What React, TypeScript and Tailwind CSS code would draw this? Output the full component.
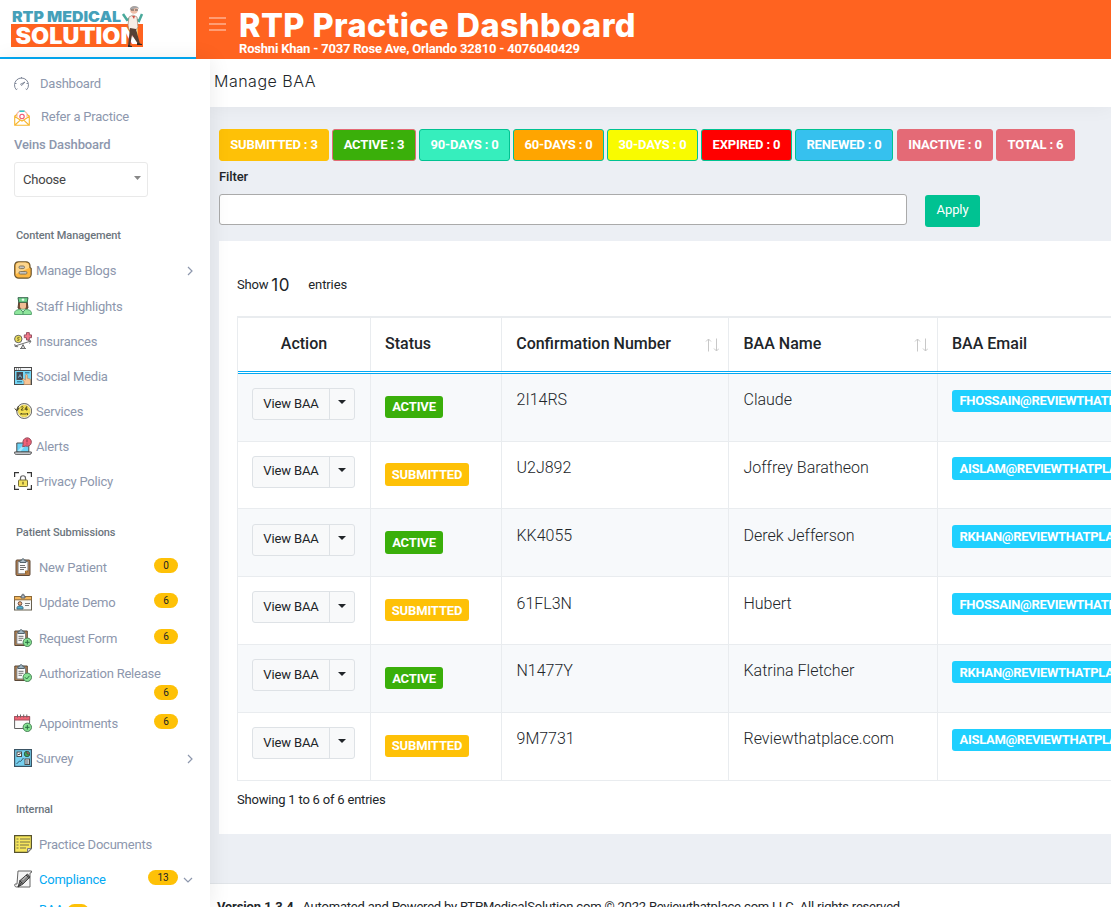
import type { ReactNode } from "react";

type IconProps = { children: ReactNode };

function Icon({ children }: IconProps) {
  return (
    <svg width="18" height="18" viewBox="0 0 18 18" fill="none" stroke="#4a4a4a" strokeWidth="1" className="-mt-[2px] block shrink-0">
      {children}
    </svg>
  );
}

const icons = {
  blog: (
    <Icon>
      <path d="M4.500.8h7.500a4 4 0 0 1 4 4v1.700l1.200 1v5.700a4 4 0 0 1-4 4h-8.500a4 4 0 0 1-4-4v-8.400a4 4 0 0 1 3.800-4z" fill="#fdb63f" stroke="#6b5632" strokeWidth="1.200" />
      <path d="M2 4a3 3 0 0 1 3-2.500h6.500A4 4 0 0 1 15 4.500V7L2 13z" fill="#fdd68d" stroke="none" />
      <rect x="5" y="5" width="5.500" height="2.600" rx="1.300" fill="#c5c5c5" stroke="#85775a" />
      <rect x="5" y="10.500" width="8" height="2.600" rx="1.300" fill="#c5c5c5" stroke="#85775a" />
    </Icon>
  ),
  staff: (
    <Icon>
      <path d="M4.800 5 4 11l2.500 1.500h5L14 11l-.8-6z" fill="#7a4d30" stroke="#54402f" />
      <path d="M6 5.500h6v3.700a3 3 0 0 1-6 0z" fill="#f0bd94" stroke="none" />
      <path d="M4 .7h10l-.8 4.600H4.800z" fill="#6fd58b" stroke="#35644a" />
      <path d="M9 1.500v2.600M7.700 2.800h2.600" stroke="#fff" />
      <path d="M.6 17.500v-1.700c0-2 2-3 6-3.500h4.800c4 .5 6 1.500 6 3.500v1.700z" fill="#8fe69c" stroke="#5aa573" />
      <path d="M6.500 12.500 9 15l2.500-2.500M9 15v2.500" stroke="#4f9468" fill="#c7f3cd" />
    </Icon>
  ),
  insurance: (
    <Icon>
      <circle cx="4.300" cy="7" r="3.700" fill="#efe15a" stroke="#666" />
      <path d="M5.500 5.700c-2-1-2.700.8-1.200 1.200s.8 2.200-1.200 1.200" stroke="#6f6526" />
      <path d="M12.500.6h2.800v2.300h2.200v2.800h-2.200V8h-2.800V5.700h-2.200V2.900h2.200z" fill="#f2778b" stroke="#965260" />
      <path d="M1 14 17 9M.8 12l.3 2.500 3 .2M14 8.500l3 .5-1.500 2.500" stroke="#707070" />
      <path d="M6 16.500h6M7 16.500l2-4 2 4" fill="#d5d5d5" stroke="#707070" />
    </Icon>
  ),
  social: (
    <Icon>
      <rect x=".5" y=".5" width="17" height="17" fill="#76d7f5" />
      <rect x=".5" y=".5" width="17" height="3" fill="#f3f5f7" />
      <path d="M2 2h1M4 2h1M6 2h1" />
      <rect x="3" y="5.500" width="5.500" height="7" fill="#3e4857" />
      <path d="M4.500 10.500c0-2 3-2 3 0M6 7.500v1" stroke="#9bd6e8" />
      <path d="M11 5.800h4.500M3 14.800h5" stroke="#27627d" />
      <path d="M10 17.500v-3l-1.500-2 1-.8 2 1.200V8.300c0-1.300 1.800-1.300 1.800 0v3l3.200 1v5.200z" fill="#f8c595" stroke="#b98b63" strokeWidth=".7" />
    </Icon>
  ),
  services: (
    <Icon>
      <circle cx="10.200" cy="9" r="7.500" fill="#f5f1dc" stroke="#666" />
      <circle cx="10.200" cy="9" r="5.800" fill="#f3de50" stroke="#e5d358" />
      <path d="M7 5.500c.2-1.300 2.600-1.200 2 .2L7 8h2.500M12.700 8.500V4.500L10.800 7.300h3" stroke="#57501c" />
      <path d="M7 13v-2l1 1h4.500l1-1v2" stroke="#57501c" />
      <path d="M4.500 4 3.200 8M.6 6.500l2.500 2.300 2-2.800" stroke="#453f20" />
    </Icon>
  ),
  alerts: (
    <Icon>
      <path d="M2.800 15V6h12v9z" fill="#69d3f7" />
      <path d="m3.500 14 7-7.500h3L6.500 14.500z" fill="#a9e9fc" stroke="none" />
      <path d="M.6 15h16.800v.8c0 1-.7 1.500-1.500 1.500H2.100C1.100 17.300.6 16.800.6 15.800z" fill="#e1e5ea" />
      <path d="m8.700 9.800.5-3.300a4.200 4.200 0 1 1 2.500 2.500z" fill="#f06277" stroke="#8e4a59" />
      <path d="M13 2.300v3M13 6.500v.9" stroke="#8b3a4d" />
    </Icon>
  ),
  privacy: (
    <Icon>
      <path d="M.6 5V.6H5M13 .6h4.400V5M17.400 13v4.400H13M5 17.400H.6V13" stroke="#353535" strokeWidth="1.200" />
      <path d="M6.500 8V6c0-3 5-3 5 0v2" stroke="#666" strokeWidth="1.200" />
      <rect x="4.500" y="8" width="9" height="6.500" rx=".8" fill="#f4e25e" stroke="#756e3a" />
      <path d="M9 9.800v2.800" stroke="#625924" strokeWidth="1.200" />
    </Icon>
  ),
  patient: (
    <Icon>
      <rect x="2" y="2" width="14" height="15.500" rx="1" fill="#b87f4b" stroke="#5f4937" />
      <path d="M4 3.500h10v9.500l-2.500 2.800H4z" fill="#fafafa" stroke="#777" />
      <path d="M11.500 16v-3H14z" fill="#f6ad40" stroke="#9c6b31" />
      <path d="M6 4.500V2.300h1.700C7.700.2 10.300.2 10.300 2.300H12v2.200z" fill="#a8bac5" stroke="#53636c" />
      <path d="M6 7.500h5M6 9.500h6M6 11.500h4" stroke="#707070" />
    </Icon>
  ),
  demo: (
    <Icon>
      <rect x=".5" y="3.500" width="17" height="13.500" fill="#f8f8f8" stroke="#67604f" />
      <rect x=".5" y="3.500" width="17" height="3.300" fill="#f3b65c" stroke="#8d6a38" />
      <path d="M7 5V3h1C8 .2 10 .2 10 3h1v2z" fill="#b3bcc4" stroke="#596069" />
      <path d="M3 16v-1.500c0-2 6-2 6 0V16z" fill="#4bb2d4" stroke="#426c80" />
      <circle cx="6" cy="10.500" r="1.800" fill="#f2b17c" stroke="#69473b" />
      <path d="M11 10.500h5M11 12.500h4" stroke="#777" />
    </Icon>
  ),
  request: (
    <Icon>
      <path d="M.8 2h12.500v14.500H.8z" fill="#b7824f" stroke="#594838" />
      <path d="M2.800 4h8.800v11H2.800z" fill="#fafafa" stroke="#777" />
      <path d="M4 4.500V2.300h1.500C5.500.2 8.700.2 8.700 2.300h1.500v2.200z" fill="#9fb5c2" stroke="#53636c" />
      <path d="M4.500 7.300h5M4.500 9.300h5M4.500 11.300H8" stroke="#707070" />
      <circle cx="13.300" cy="13.300" r="4.200" fill="#86e291" stroke="#4a8058" />
      <path d="M13.300 11v4.600M11 13.300h4.600" stroke="#276c40" />
    </Icon>
  ),
  authorization: (
    <Icon>
      <path d="M.8 2h12.500v14.500H.8z" fill="#b7824f" stroke="#594838" />
      <path d="M2.800 4h8.800v11H2.800z" fill="#fafafa" stroke="#777" />
      <path d="M4 4.500V2.300h1.500C5.500.2 8.700.2 8.700 2.300h1.500v2.200z" fill="#9fb5c2" stroke="#53636c" />
      <path d="M4.500 7.300h5M4.500 9.300h5M4.500 11.300H8" stroke="#707070" />
      <circle cx="13.300" cy="13.300" r="4.200" fill="#86e291" stroke="#4a8058" />
      <path d="m11 13.300 1.700 1.700 2.800-3.200" stroke="#276c40" />
    </Icon>
  ),
  appointments: (
    <Icon>
      <path d="M.6 2.500h15v12h-15z" fill="#fbfbfb" stroke="#606060" />
      <path d="M.6 2.500h15v3.500h-15z" fill="#f06475" stroke="#a9515f" />
      <path d="M3.500.5v3M6.500.5v3M9.700.5v3M12.800.5v3" stroke="#666" />
      <circle cx="13.300" cy="13.300" r="4.200" fill="#86e291" stroke="#4a8058" />
      <path d="M13.300 11v4.600M11 13.300h4.600" stroke="#276c40" />
    </Icon>
  ),
  survey: (
    <Icon>
      <rect x=".6" y=".6" width="16.800" height="16.800" fill="#76d0ef" stroke="#3b5464" strokeWidth="1.200" />
      <rect x="3" y="3" width="4.500" height="4.500" fill="#f7f7f7" />
      <path d="m4 5 1 1 1.500-2" />
      <circle cx="13" cy="5" r="2.700" fill="#3fa45a" stroke="#355e47" />
      <path d="M13 2.300V5h2.700" fill="#f06475" stroke="#415048" />
      <rect x="11" y="10" width="4.500" height="5.500" fill="#f5f5f5" />
      <path d="M12 12h2.500M12 14h2.500M2.500 15l3-3 1 .5 3-3.500" stroke="#36566a" />
    </Icon>
  ),
  documents: (
    <Icon>
      <path d="M.6.6h16.800v13l-3.800 3.800H.6z" fill="#f6e65c" stroke="#57532f" strokeWidth="1.200" />
      <path d="M13.500 17.300v-3.800h3.800z" fill="#ddd" stroke="#77777f" />
      <path d="M2.500 4h2M6 4h10M2.500 7h2M6 7h10M2.500 10h2M6 10h9M2.500 13h2M6 13h6" stroke="#757048" />
    </Icon>
  ),
  compliance: (
    <Icon>
      <path d="M4 1h13.500v1.500l-1.500.5v14H2.500C.3 17 .5 14.500 1 14h2z" fill="#f5f5f5" stroke="#666" />
      <path d="m4 17 2-6.500 7.500-6.500 2.500 3-7 7z" fill="#858585" stroke="#434343" />
      <path d="m4 17 4-5M12 5l3.500 3M5.500 10.500l3 3" stroke="#333" />
      <path d="m8.500 10 4-4" stroke="#d9d9d9" />
    </Icon>
  ),
};

function Chevron({ down = false }: { down?: boolean }) {
  return (
    <svg width="10" height="10" viewBox="0 0 10 10" fill="none" stroke="#8d97ad" strokeWidth="1.200">
      <path d={down ? "m1 3 4 4 4-4" : "m3 1 4 4-4 4"} />
    </svg>
  );
}

type RowProps = { icon: ReactNode; label: string; gap?: string; height?: string; count?: string; chevron?: boolean };

function Row({ icon, label, gap = "gap-1", height = "h-[35px]", count, chevron }: RowProps) {
  return (
    <li className={`flex items-center ${height} ${gap} pl-[14px] pr-[15px]`}>
      {icon}
      <span className="whitespace-nowrap">{label}</span>
      {count && <Count value={count} />}
      {chevron && (
        <span className="ml-auto">
          <Chevron />
        </span>
      )}
    </li>
  );
}

function Count({ value, className = "ml-auto mr-[17px] -mt-[4px] w-6" }: { value: string; className?: string }) {
  return (
    <span className={`flex h-[15px] items-center justify-center rounded-full bg-[#fec107] pt-px text-[10px] leading-none tracking-normal text-[#212529] ${className}`}>
      {value}
    </span>
  );
}

function Sidebar() {
  return (
    <nav className="relative z-10 h-[848px] w-[210px] shrink-0 bg-white text-[13px] leading-5 tracking-[-0.22px] text-[#8d97ad] shadow-[1px_0_20px_rgba(0,0,0,0.08)]">
      <div className="h-[848px] overflow-hidden pt-2">
        <ul>
          <li className="flex h-[33px] items-center pl-[14px]">
            <svg width="15" height="15" viewBox="0 0 15 15" fill="none" stroke="#7f8798" strokeWidth="1">
              <path d="M3.400 12.800 2.300 13.700a7 7 0 1 1 10.400 0l-1.100-.9M7.500 1v1.500M1 7.500h1.500M12.500 7.500H14M3 3l.8.8M12 3l-.8.8" />
              <path d="M6.500 8.300 11 6 7.800 9.500z" />
            </svg>
            <span className="ml-[11px]">Dashboard</span>
          </li>
          <li className="flex h-[33px] items-center pl-[14px]">
            <svg width="16" height="16" viewBox="0 0 16 16" fill="none" strokeWidth="1.100" className="mt-[2px]">
              <path d="M3 7V3.500L5.500 1h5L13 3.500V7" stroke="#f7b6a9" fill="#fff" />
              <path d="M5.500 1.200h5" stroke="#28c8c8" strokeWidth="1.500" />
              <circle cx="8" cy="6.500" r="2.200" stroke="#ed5570" />
              <path d="M3 4.500.7 6v9.300h14.600V6L13 4.500M.7 6.500 8 11l7.300-4.500M1 15l5-4.700M15 15l-5-4.700" stroke="#f7b62e" />
            </svg>
            <span className="ml-[11px]">Refer a Practice</span>
          </li>
        </ul>
        <div className="mt-[2px] pl-[14px] font-medium tracking-[-0.13px]">Veins Dashboard</div>
        <div className="ml-[14px] mt-[7px] flex h-[35px] w-[134px] items-center justify-between rounded-[3px] border border-[#e9e9e9] pl-2 pr-[6px] text-[#444]">
          Choose
          <svg width="7" height="4" viewBox="0 0 7 4" className="-mt-[3px]">
            <path d="M0 0h7L3.500 4z" fill="#888" />
          </svg>
        </div>
        <h2 className="mt-[29px] pl-4 text-[11px] font-medium tracking-[-0.1px] text-[#6c757d]">Content Management</h2>
        <ul className="mt-[7px]">
          <Row icon={icons.blog} label="Manage Blogs" chevron height="h-[36px]" />
          <Row icon={icons.staff} label="Staff Highlights" />
          <Row icon={icons.insurance} label="Insurances" />
          <Row icon={icons.social} label="Social Media" />
          <Row icon={icons.services} label="Services" />
          <Row icon={icons.alerts} label="Alerts" />
          <Row icon={icons.privacy} label="Privacy Policy" />
        </ul>
        <h2 className="mt-[24px] pl-4 text-[11px] font-medium tracking-[-0.1px] text-[#6c757d]">Patient Submissions</h2>
        <ul className="mt-[7px]">
          <Row icon={icons.patient} label="New Patient" count="0" gap="gap-[7px]" />
          <Row icon={icons.demo} label="Update Demo" count="6" gap="gap-[7px]" />
          <Row icon={icons.request} label="Request Form" count="6" gap="gap-[7px]" height="h-[37px]" />
          <Row icon={icons.authorization} label="Authorization Release" gap="gap-[7px]" height="h-[34px]" />
        </ul>
        <Count value="6" className="-mt-[6px] ml-[154px] w-6" />
        <ul className="mt-[6px]">
          <Row icon={icons.appointments} label="Appointments" count="6" gap="gap-[7px]" />
          <Row icon={icons.survey} label="Survey" chevron />
        </ul>
        <h2 className="mt-[24px] pl-4 text-[11px] font-medium tracking-[-0.1px] text-[#6c757d]">Internal</h2>
        <ul className="mt-[7px]">
          <Row icon={icons.documents} label="Practice Documents" gap="gap-[7px]" />
          <li className="flex h-[35px] items-center gap-[7px] pl-[14px] text-[#03a9f3]">
            {icons.compliance}
            <span>Compliance</span>
            <Count value="13" className="-mt-[4px] ml-auto w-[30px]" />
            <span className="-ml-[2px] mr-[17px]">
              <Chevron down />
            </span>
          </li>
          <li className="flex items-start pl-[39px] pt-[3px] text-[#03a9f3]">
            <span className="w-[28px]">BAA</span>
            <Count value="6" className="mt-[4px] w-[22px]" />
          </li>
        </ul>
      </div>
    </nav>
  );
}

function Logo() {
  return (
    <svg width="196" height="57" viewBox="0 0 196 57" className="block">
      <text x="12" y="21.500" fontFamily="Inter, sans-serif" fontWeight="900" fontSize="15" fill="#45a0b9" textLength="109" lengthAdjust="spacingAndGlyphs">RTP MEDICAL</text>
      <rect x="11" y="24" width="132" height="23" fill="#ff6320" />
      <text x="15.500" y="43.800" fontFamily="Inter, sans-serif" fontWeight="900" fontSize="22.500" fill="#fff" textLength="123" lengthAdjust="spacingAndGlyphs">SOLUTION</text>
      <path d="m123 14 4 6 4-2M142 14l-3 7-5-3" stroke="#49a99b" strokeWidth="2.500" fill="none" />
      <path d="m129 17 4-2 4 2 1 10-2 3h-7l-1-5z" fill="#f6eee6" stroke="#9c8270" strokeWidth=".7" />
      <path d="m132 16 2 3 1-3" fill="#d34d43" />
      <path d="m130 28 6 1 4 15h-2l-6-9-2 11h-2z" fill="#554035" />
      <path d="m128 45 4 1v1h-4zM137 43l5 1v1h-5z" fill="#352a29" />
      <circle cx="134" cy="10" r="3.800" fill="#eebea7" />
      <path d="M130 10c-1-4 8-6 9-1l-2-1-4 1z" fill="#a6a4a5" />
      <path d="M131 10h3M135 10h3" stroke="#555" />
    </svg>
  );
}

const pills = [
  { label: "SUBMITTED : 3", style: "w-[110px] bg-[#fec107] border-[#fec107]" },
  { label: "ACTIVE : 3", style: "w-[84px] bg-[#3aaf0a] border-[#e46a76]" },
  { label: "90-DAYS : 0", style: "w-[91px] bg-[#36eebd] border-[#00c292]" },
  { label: "60-DAYS : 0", style: "w-[91px] bg-[#ffa500] border-[#00c292]" },
  { label: "30-DAYS : 0", style: "w-[91px] bg-[#f9fb00] border-[#00c292]" },
  { label: "EXPIRED : 0", style: "w-[91px] bg-[#ff0000] border-[#00c292]" },
  { label: "RENEWED : 0", style: "w-[98px] bg-[#36c1ee] border-[#00c292]" },
  { label: "INACTIVE : 0", style: "ml-px w-[96px] bg-[#e46a76] border-[#e46a76]" },
  { label: "TOTAL : 6", style: "w-[79px] bg-[#e46a76] border-[#e46a76]" },
];

const rows = [
  { active: true, code: "2I14RS", name: "Claude", email: "FHOSSAIN@REVIEWTHATPLACE.COM" },
  { active: false, code: "U2J892", name: "Joffrey Baratheon", email: "AISLAM@REVIEWTHATPLACE.COM" },
  { active: true, code: "KK4055", name: "Derek Jefferson", email: "RKHAN@REVIEWTHATPLACE.COM" },
  { active: false, code: "61FL3N", name: "Hubert", email: "FHOSSAIN@REVIEWTHATPLACE.COM" },
  { active: true, code: "N1477Y", name: "Katrina Fletcher", email: "RKHAN@REVIEWTHATPLACE.COM" },
  { active: false, code: "9M7731", name: "Reviewthatplace.com", email: "AISLAM@REVIEWTHATPLACE.COM" },
];

function SortArrows() {
  return (
    <svg width="14" height="14" viewBox="0 0 14 14" fill="none" stroke="#c8c8c8" strokeWidth="1">
      <path d="M3.500 13.500V1M1 3.500 3.500 1 6 3.500M11.500.5V13M9 10.500l2.500 2.500 2.500-2.500" />
    </svg>
  );
}

const columns = "grid grid-cols-[133px_131px_227px_209px_300px]";

function BaaTable() {
  return (
    <div className="w-[1001px] border-l border-t-2 border-[#e9ecef] text-base text-[#212529]">
      <div className={`${columns} h-[55.8px] border-b-[3px] border-double border-[#03a9f3] font-medium leading-6`}>
        <div className="border-r border-[#e9ecef] pt-[13.500px] text-center">Action</div>
        <div className="border-r border-[#e9ecef] pl-[14px] pt-[13.500px]">Status</div>
        <div className="flex justify-between border-r border-[#e9ecef] pl-[14.200px] pr-[9px] pt-[13.500px]">
          Confirmation Number
          <span className="pt-[6px]">
            <SortArrows />
          </span>
        </div>
        <div className="flex justify-between border-r border-[#e9ecef] pl-[14.500px] pr-[9px] pt-[13.500px]">
          BAA Name
          <span className="pt-[6px]">
            <SortArrows />
          </span>
        </div>
        <div className="pl-[14px] pt-[13.500px]">BAA Email</div>
      </div>
      {rows.map((row) => (
        <div key={row.code} className={`${columns} h-[67.8px] border-b border-[#e9ecef] leading-6 odd:bg-white even:bg-[#f7f9fb]`}>
          <div className="border-r border-[#e9ecef] pl-[14px] pt-[14.200px]">
            <div className="flex h-8 w-[103px] rounded-[3px] border border-[#dee2e6] bg-[#f8f9fa] text-[13px] tracking-[-0.12px]">
              <span className="flex w-[77px] items-center justify-center border-r border-[#dee2e6] pb-[0.800px]">View BAA</span>
              <span className="flex grow items-center justify-center">
                <svg width="8" height="4" viewBox="0 0 8 4" className="-mt-[3px]">
                  <path d="M0 0h8L4 4z" fill="#212529" />
                </svg>
              </span>
            </div>
          </div>
          <div className="border-r border-[#e9ecef] pl-[14px] pt-[21.800px]">
            <div
              className={
                row.active
                  ? "flex h-[22.500px] w-[58px] items-center justify-center rounded-[3px] bg-[#3aaf0a] pt-px text-[13px] font-bold tracking-[-0.15px] text-white"
                  : "flex h-[22.500px] w-[84px] items-center justify-center rounded-[3px] bg-[#fec107] pt-px text-[13px] font-bold tracking-[-0.15px] text-white"
              }
            >
              {row.active ? "ACTIVE" : "SUBMITTED"}
            </div>
          </div>
          <div className="border-r border-[#e9ecef] pl-[14.500px] pt-[14.400px] font-[350]">{row.code}</div>
          <div className="border-r border-[#e9ecef] pl-[14.500px] pt-[14.400px] font-[350]">{row.name}</div>
          <div className="pl-[14px] pt-[15.800px]">
            <div className="flex h-[22.500px] items-center rounded-[3px] bg-[#1fd0ff] pl-[7.500px] pt-px text-[13px] font-bold tracking-[-0.3px] text-white">{row.email}</div>
          </div>
        </div>
      ))}
    </div>
  );
}

export default function App() {
  return (
    <div className="h-[907px] w-[1111px] overflow-hidden bg-[#eceff4] font-[Roboto,sans-serif] text-[13px] text-[#212529]">
      <header className="flex h-[59px] bg-[#ff6320]">
        <div className="h-[59px] w-[196px] border-b-2 border-[#03a9f3] bg-white">
          <Logo />
        </div>
        <svg width="17" height="14" viewBox="0 0 17 14" className="ml-[13px] mt-[17px]">
          <path d="M0 1h17M0 7h17M0 13h17" stroke="#fff" strokeOpacity=".5" strokeWidth="1.500" />
        </svg>
        <div className="ml-[13px] text-white">
          <div className="mt-[6px] h-[35px] whitespace-nowrap font-[Inter,sans-serif] text-[32.500px] font-extrabold leading-[40px] tracking-[0.42px]">RTP Practice Dashboard</div>
          <div className="text-[13px] font-bold leading-[15px] tracking-[-0.2px]">Roshni Khan - 7037 Rose Ave, Orlando 32810 - 4076040429</div>
        </div>
      </header>
      <div className="flex">
        <Sidebar />
        <main className="h-[848px] w-[901px] overflow-hidden">
          <div className="h-12 bg-white pl-1 pt-[10px] font-[Inter,sans-serif] text-[16px] font-light leading-6 tracking-[0.5px] shadow-[0_0_20px_rgba(0,0,0,0.05)]">Manage BAA</div>
          <div className="pl-[9px] pt-[22px]">
            <div className="flex gap-[3px]">
              {pills.map((pill) => (
                <div key={pill.label} className={`flex h-8 shrink-0 items-center justify-center rounded-[3px] border text-[13px] font-bold tracking-[-0.15px] text-white ${pill.style}`}>
                  {pill.label}
                </div>
              ))}
            </div>
            <div className="mt-[6px] font-medium leading-5 tracking-[-0.1px]">Filter</div>
            <div className="mt-[7px] flex h-[33px] items-start gap-[18px]">
              <div className="h-[31px] w-[688px] rounded-[3px] border border-[#aaa] bg-white" />
              <div className="mt-px flex h-8 w-[55px] items-center justify-center rounded-[3px] bg-[#00c292] pb-[2px] tracking-[-0.1px] text-white">Apply</div>
            </div>
            <section className="mt-[14px] h-[593px] overflow-hidden bg-white pl-[18px] pt-[32px] tracking-[-0.2px]">
              <div className="flex h-6 items-center">
                Show
                <span className="ml-[3px] mt-px w-[19px] font-[Inter,sans-serif] text-[17px] font-normal tracking-[0.5px]">10</span>
                <span className="ml-[18px] tracking-[-0.1px]">entries</span>
              </div>
              <div className="mt-[19px] tracking-normal">
                <BaaTable />
              </div>
              <div className="mt-[9px] leading-5">Showing 1 to 6 of 6 entries</div>
            </section>
          </div>
          <footer className="mt-[49px] h-[40px] border-t border-[#e1e5e9] bg-white pl-[7px] pt-[13px] leading-5 tracking-[-0.2px]">
            <b className="tracking-[-0.1px]">Version 1.3.4 .</b>
            <span className="ml-[2px]">Automated and Powered by RTPMedicalSolution.com © 2022 Reviewthatplace.com LLC. All rights reserved</span>
          </footer>
        </main>
      </div>
    </div>
  );
}
